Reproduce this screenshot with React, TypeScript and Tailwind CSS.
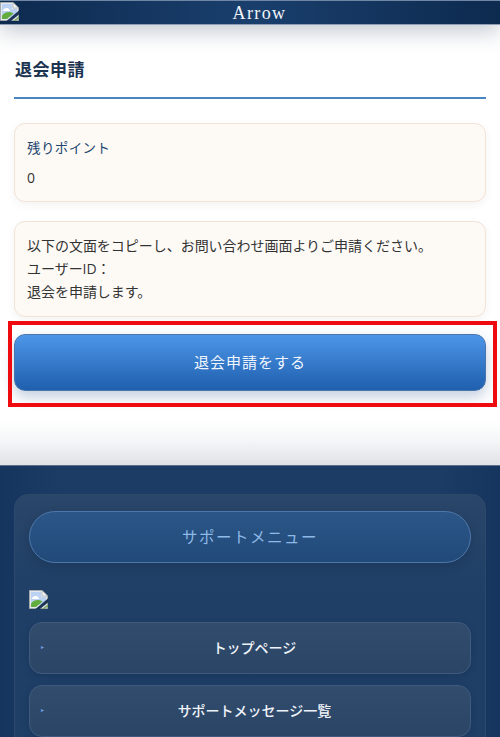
const SANS = "[font-family:'Open_Sans','Noto_Sans_CJK_JP',sans-serif]";
const SERIF = "[font-family:'Liberation_Serif','Noto_Sans_CJK_JP',serif]";

function BrokenImage({ className }: { className?: string }) {
  return (
    <svg viewBox="0 0 19 19" className={className}>
      <path d="M0.5 0.5H13L18.5 6V18.5H0.5Z" fill="#e4e8ee" stroke="#a4a9ad" />
      <path d="M13 0.5V6H18.5Z" fill="#f6f6f6" stroke="#a4a9ad" strokeWidth="0.7" />
      <path d="M2 2H12V7H17V15H2Z" fill="#bcd2f2" />
      <path d="M2.500 9c1-2.500 3-3.500 5-3 1.200.3 2.200 1.500 2.700 3Z" fill="#ffffff" />
      <path d="M2 17V13.500C5 9.500 10 9 13.500 11.500L7 17Z" fill="#62ad3e" />
      <path d="M6.500 19L19 8.500V12.500L11 19Z" fill="#1d3557" />
      <path d="M13 19L19 14V17.500H17L16 19Z" fill="#7fa46a" />
    </svg>
  );
}

function MenuItem({ label }: { label: string }) {
  return (
    <div className="relative flex h-[52px] items-center justify-center rounded-[13px] border border-[#3f5a7c] bg-gradient-to-b from-[#324c6d] to-[#2b4566] pb-[2px] pl-[9px] shadow-[0_2px_6px_rgba(10,30,60,0.25)]">
      <span className="absolute left-[11px] text-[6px] leading-none text-[#6f9fe0]">▸</span>
      <span className="text-[14px] font-medium text-[#eef3f9]">{label}</span>
    </div>
  );
}

export default function App() {
  return (
    <div className={`relative h-[737px] w-[500px] overflow-hidden bg-white ${SANS}`}>
      <header className="relative z-10 flex h-[25px] items-center justify-center border-b border-t border-b-[#8e9db3] border-t-[#6f86a5] bg-[linear-gradient(90deg,#0d2a4f_0%,#1a3f6d_50%,#0d2a4f_100%)] pl-[19px] shadow-[0_6px_22px_rgba(30,50,80,0.28)]">
        <BrokenImage className="absolute left-0 top-[1px] h-[19px] w-[19px]" />
        <span className={`${SERIF} text-[18px] leading-none tracking-[1.400px] text-[#f2f5f9]`}>Arrow</span>
      </header>

      <main className="h-[440px] bg-[linear-gradient(180deg,#ffffff_0%,#ffffff_90%,#f3f4f6_95%,#e0e2e6_100%)] px-[14px]">
        <h1 className="pt-[32px] pl-[1px] text-[17px] font-semibold leading-[26px] tracking-[0.5px] text-[#1c3350]">退会申請</h1>
        <div className="mt-[14px] h-[2px] bg-[#4a86c0]" />

        <section className="mt-[24px] h-[79px] rounded-[11px] border border-[#f2e3d6] bg-[#fdfaf6] px-[12px] pt-[13px] shadow-[0_3px_8px_rgba(60,50,40,0.06)]">
          <div className="text-[13.5px] leading-[22px] tracking-[0.4px] text-[#23466f]">残りポイント</div>
          <div className="mt-[9px] text-[14px] leading-[20px] text-[#333333]">0</div>
        </section>

        <section className="mt-[19px] h-[96px] rounded-[11px] border border-[#f2e3d6] bg-[#fdfaf6] px-[12px] pt-[12px] text-[14px] leading-[23px] tracking-[-0.03px] text-[#333333] shadow-[0_3px_8px_rgba(60,50,40,0.06)]">
          <p>以下の文面をコピーし、お問い合わせ画面よりご申請ください。</p>
          <p>ユーザーID：</p>
          <p>退会を申請します。</p>
        </section>

        <button
          type="button"
          className="mt-[17px] flex h-[57px] w-full items-center justify-center rounded-[11px] border border-[#4a76ad] bg-gradient-to-b from-[#4d96e8] to-[#1f5fae] text-[15px] tracking-[1px] text-[#f1f6fc] shadow-[0_6px_14px_rgba(40,80,140,0.28)]"
        >
          退会申請をする
        </button>
      </main>

      <footer className="h-[272px] border-t border-[#5b6f8a] bg-[linear-gradient(90deg,#15355e_0%,#1c3c65_12%,#1c3c65_88%,#15355e_100%)] px-[14px] pt-[28px]">
        <div className="h-[300px] rounded-[14px] border border-[#2d486b] bg-[linear-gradient(180deg,#2a4669_0%,#1f3f67_35%,#1f3f67_100%)] px-[14px] pt-[16px]">
          <div className="flex h-[52px] items-center justify-center rounded-full border border-[#4c77aa] bg-gradient-to-b from-[#2b5687] to-[#214a79] pt-[1px] text-[15.5px] tracking-[1.500px] text-[#8fbae8] shadow-[0_4px_10px_rgba(10,30,60,0.25)]">
            サポートメニュー
          </div>
          <BrokenImage className="mt-[27px] h-[19px] w-[19px]" />
          <div className="mt-[13px] flex flex-col gap-[11px]">
            <MenuItem label="トップページ" />
            <MenuItem label="サポートメッセージ一覧" />
          </div>
        </div>
      </footer>

      {/* red annotation round the button */}
      <div className="pointer-events-none absolute left-[8px] top-[321px] z-20 h-[86px] w-[489px] border-[4px] border-[#ee0a0e]" />
    </div>
  );
}
